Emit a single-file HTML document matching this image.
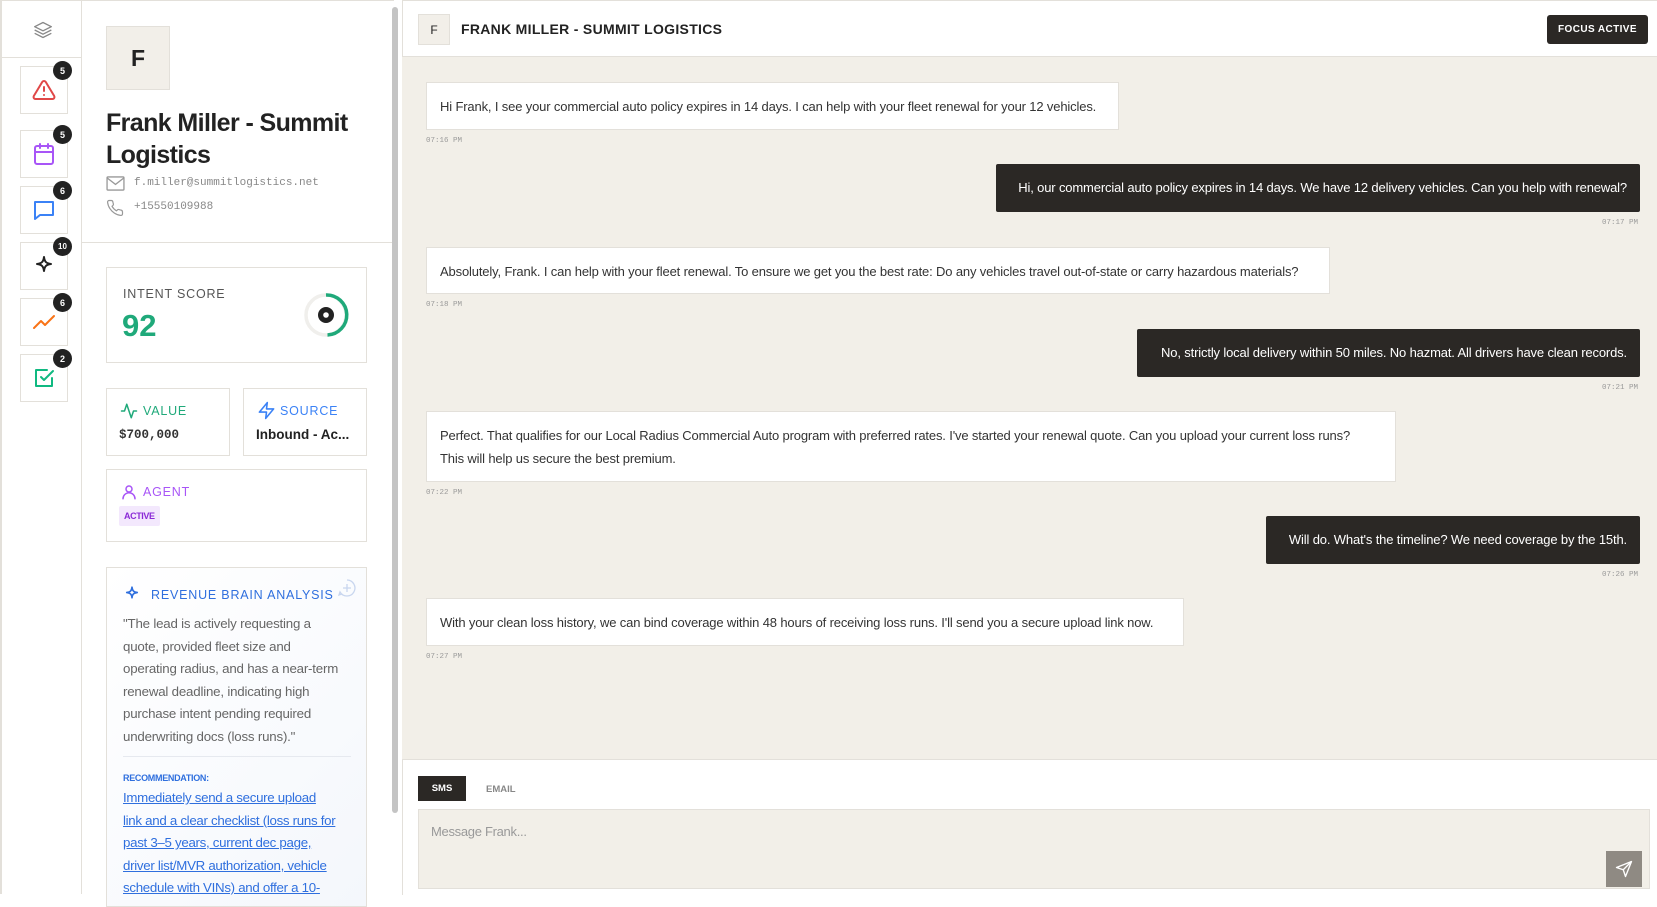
<!DOCTYPE html>
<html><head><meta charset="utf-8"><style>
*{box-sizing:border-box;margin:0;padding:0}
body{width:1657px;height:894px;overflow:hidden;font-family:"Liberation Sans",sans-serif;background:#fff;position:relative;color:#222}
.abs{position:absolute}
.rail{left:0;top:0;width:82px;height:894px;border-right:1px solid #e3e0da;border-left:2px solid #e3e0da;border-top:1px solid #e3e0da;background:#fff}
.ib{position:absolute;left:18px;width:48px;height:48px;border:1px solid #e3e0da;background:#fff;display:flex;align-items:center;justify-content:center}
.bd{position:absolute;left:32px;top:-6px;width:19px;height:19px;border-radius:50%;background:#222;color:#fff;font-size:9px;font-weight:bold;display:flex;align-items:center;justify-content:center}
.prof{left:82px;top:0;width:312px;height:894px;background:#fff;border-top:1px solid #e3e0da}
.card{position:absolute;border:1px solid #e3e0da;background:#fff}
.lbl{font-size:12.5px;letter-spacing:.8px}
.chat{left:402px;top:0;width:1255px;height:894px;background:#f2efe8;border-top:1px solid #e3e0da}
.msg{position:absolute;font-size:13px;letter-spacing:-.15px;line-height:23px;padding:12px 13px;white-space:nowrap}
.in{background:#fff;border:1px solid #e3e0da;color:#333}
.out{background:#2b2825;color:#fff;border-radius:2px}
.ts{position:absolute;font-family:"Liberation Mono",monospace;font-size:7.5px;color:#999}
.nw{white-space:nowrap}
</style></head><body>
<div class="abs rail">
 <div class="abs" style="left:0;top:56px;width:80px;border-top:1px solid #e3e0da"></div>
 <svg class="abs" style="left:30px;top:19px" width="22" height="20" viewBox="0 0 24 24" fill="none" stroke="#888" stroke-width="1.6" stroke-linejoin="round"><path d="M12 3 2 8l10 5 10-5z"/><path d="m2 12 10 5 10-5"/><path d="m2 16 10 5 10-5"/></svg>
 <div class="ib" style="top:65px"><svg width="26" height="24" viewBox="0 0 24 24" fill="none" stroke="#e04848" stroke-width="2" stroke-linecap="round" stroke-linejoin="round"><path d="M10.3 3.9 1.8 18a2 2 0 0 0 1.7 3h17a2 2 0 0 0 1.7-3L13.7 3.9a2 2 0 0 0-3.4 0z"/><path d="M12 9v4M12 17h.01"/></svg><div class="bd">5</div></div>
 <div class="ib" style="top:129px"><svg width="24" height="24" viewBox="0 0 24 24" fill="none" stroke="#a855f7" stroke-width="2" stroke-linecap="round"><rect x="3" y="4" width="18" height="18" rx="2"/><path d="M16 2v4M8 2v4M3 10h18"/></svg><div class="bd">5</div></div>
 <div class="ib" style="top:185px"><svg width="24" height="24" viewBox="0 0 24 24" fill="none" stroke="#3b82f6" stroke-width="2" stroke-linejoin="round"><path d="M3 4h18v13H8l-5 4z"/></svg><div class="bd">6</div></div>
 <div class="ib" style="top:241px"><svg width="24" height="24" viewBox="0 0 24 24" fill="none" stroke="#222" stroke-width="2" stroke-linejoin="round"><path d="M12 3c.6 4.8 2.2 6.4 7 7-4.8.6-6.4 2.2-7 7-.6-4.8-2.2-6.4-7-7 4.8-.6 6.4-2.2 7-7z"/></svg><div class="bd" style="font-size:8px">10</div></div>
 <div class="ib" style="top:297px"><svg width="26" height="24" viewBox="0 0 24 24" fill="none" stroke="#f97316" stroke-width="2" stroke-linecap="round" stroke-linejoin="round"><path d="M2 18l7-7 4 4 9-9"/></svg><div class="bd">6</div></div>
 <div class="ib" style="top:353px"><svg width="24" height="24" viewBox="0 0 24 24" fill="none" stroke="#10b981" stroke-width="2" stroke-linecap="round" stroke-linejoin="round"><path d="M20 12v8H4V4h11"/><path d="m9 11 3 3 9-9"/></svg><div class="bd">2</div></div>
</div>
<div class="abs prof">
 <div class="abs" style="left:24px;top:25px;width:64px;height:64px;background:#f2efe9;border:1px solid #e3e0da;display:flex;align-items:center;justify-content:center;font-size:23px;font-weight:bold">F</div>
 <div class="abs" style="left:24px;top:106px;width:270px;font-size:25px;font-weight:bold;line-height:32px;letter-spacing:-.6px;color:#222">Frank Miller - Summit Logistics</div>
 <svg class="abs" style="left:24px;top:175px" width="19" height="15" viewBox="0 0 20 16" fill="none" stroke="#999" stroke-width="1.4"><rect x="1" y="1" width="18" height="14" rx="1"/><path d="m1 2 9 7 9-7"/></svg>
 <div class="abs" style="left:52px;top:176px;font-family:'Liberation Mono',monospace;font-size:11px;color:#888">f.miller@summitlogistics.net</div>
 <svg class="abs" style="left:24px;top:198px" width="18" height="18" viewBox="0 0 24 24" fill="none" stroke="#999" stroke-width="1.6" stroke-linejoin="round"><path d="M22 16.9v3a2 2 0 0 1-2.2 2 19.8 19.8 0 0 1-8.6-3.1 19.5 19.5 0 0 1-6-6A19.8 19.8 0 0 1 2.1 4.2 2 2 0 0 1 4.1 2h3a2 2 0 0 1 2 1.7c.1.9.4 1.8.7 2.7a2 2 0 0 1-.5 2.1L8 9.8a16 16 0 0 0 6 6l1.3-1.3a2 2 0 0 1 2.1-.4c.9.3 1.8.6 2.7.7a2 2 0 0 1 1.7 2z"/></svg>
 <div class="abs" style="left:52px;top:200px;font-family:'Liberation Mono',monospace;font-size:11px;color:#888">+15550109988</div>
 <div class="abs" style="left:0;top:241px;width:312px;border-top:1px solid #e3e0da"></div>
 <div class="card" style="left:24px;top:266px;width:261px;height:96px">
  <div class="abs lbl" style="left:16px;top:19px;color:#555">INTENT SCORE</div>
  <div class="abs" style="left:15px;top:40px;font-size:31px;font-weight:bold;color:#1fa97a">92</div>
  <svg class="abs" style="left:196px;top:24px" width="46" height="46" viewBox="0 0 46 46"><circle cx="23" cy="23" r="20" fill="none" stroke="#f0efec" stroke-width="3.5"/><path d="M23 3a20 20 0 0 1 1.5 40" fill="none" stroke="#1fa97a" stroke-width="3.5"/><circle cx="23" cy="23" r="8" fill="#222"/><circle cx="23" cy="23" r="2.8" fill="#fff"/></svg>
 </div>
 <div class="card" style="left:24px;top:387px;width:124px;height:68px">
  <svg class="abs" style="left:13px;top:13px" width="18" height="18" viewBox="0 0 24 24" fill="none" stroke="#1fa97a" stroke-width="2" stroke-linecap="round" stroke-linejoin="round"><path d="M22 12h-4l-3 9L9 3l-3 9H2"/></svg>
  <div class="abs lbl" style="left:36px;top:15px;color:#1fa97a">VALUE</div>
  <div class="abs" style="left:12px;top:39px;font-family:'Liberation Mono',monospace;font-size:12.5px;font-weight:bold;color:#333">$700,000</div>
 </div>
 <div class="card" style="left:161px;top:387px;width:124px;height:68px">
  <svg class="abs" style="left:13px;top:12px" width="19" height="19" viewBox="0 0 24 24" fill="none" stroke="#3b82f6" stroke-width="2" stroke-linejoin="round"><path d="M13 2 3 14h9l-1 8 10-12h-9z"/></svg>
  <div class="abs lbl" style="left:36px;top:15px;color:#3b82f6">SOURCE</div>
  <div class="abs" style="left:12px;top:38px;font-size:13.5px;font-weight:bold;color:#222">Inbound - Ac...</div>
 </div>
 <div class="card" style="left:24px;top:468px;width:261px;height:73px">
  <svg class="abs" style="left:13px;top:13px" width="18" height="18" viewBox="0 0 24 24" fill="none" stroke="#a855f7" stroke-width="2" stroke-linecap="round"><circle cx="12" cy="8" r="4"/><path d="M4 21a8 8 0 0 1 16 0"/></svg>
  <div class="abs lbl" style="left:36px;top:15px;color:#a855f7">AGENT</div>
  <div class="abs" style="left:12px;top:36px;background:#f3e8fd;color:#8b2ad6;font-size:9px;font-weight:bold;letter-spacing:-.4px;padding:5px 5px;border-radius:2px">ACTIVE</div>
 </div>
 <div class="card" style="left:24px;top:566px;width:261px;height:340px;background:linear-gradient(135deg,#fff,#f4f7fc)">
  <svg class="abs" style="left:16px;top:17px" width="18" height="18" viewBox="0 0 24 24" fill="none" stroke="#2f6fde" stroke-width="2.2" stroke-linejoin="round"><path d="M12 3c.6 4.8 2.2 6.4 7 7-4.8.6-6.4 2.2-7 7-.6-4.8-2.2-6.4-7-7 4.8-.6 6.4-2.2 7-7z"/></svg>
  <div class="abs lbl" style="left:44px;top:20px;color:#2f6fde">REVENUE BRAIN ANALYSIS</div>
  <svg class="abs" style="left:230px;top:10px" width="20" height="20" viewBox="0 0 20 20" fill="none" stroke="#c8d6ef" stroke-width="1.3"><path d="M10 2a8 8 0 1 1-7 12l-1 3 3-1"/><path d="M10 6v8M6 10h8"/></svg>
  <div class="abs nw" style="left:16px;top:45px;font-size:13.3px;line-height:22.5px;color:#666;letter-spacing:-.2px">"The lead is actively requesting a<br>quote, provided fleet size and<br>operating radius, and has a near-term<br>renewal deadline, indicating high<br>purchase intent pending required<br>underwriting docs (loss runs)."</div>
  <div class="abs" style="left:16px;top:188px;width:228px;border-top:1px solid #e6e9ef"></div>
  <div class="abs" style="left:16px;top:205px;font-size:9px;font-weight:bold;color:#2f6fde;letter-spacing:-.3px">RECOMMENDATION:</div>
  <div class="abs nw" style="left:16px;top:219px;font-size:13.3px;line-height:22.5px;color:#2f6fde;text-decoration:underline;letter-spacing:-.3px">Immediately send a secure upload<br>link and a clear checklist (loss runs for<br>past 3–5 years, current dec page,<br>driver list/MVR authorization, vehicle<br>schedule with VINs) and offer a 10-</div>
 </div>
 <div class="abs" style="left:310px;top:6px;width:6px;height:806px;background:#c4c4c4;border-radius:3px"></div>
</div>
<div class="abs chat">
 <div class="abs" style="left:0;top:0;width:1255px;height:56px;background:#fff;border-bottom:1px solid #e3e0da;border-left:1px solid #e3e0da"></div>
 <div class="abs" style="left:16px;top:13px;width:32px;height:31px;background:#f2efe9;border:1px solid #e3e0da;font-size:12px;display:flex;align-items:center;justify-content:center">F</div>
 <div class="abs" style="left:59px;top:20px;font-size:14px;font-weight:bold;letter-spacing:.3px;color:#222">FRANK MILLER - SUMMIT LOGISTICS</div>
 <div class="abs" style="left:1145px;top:14px;width:101px;height:29px;background:#2b2825;border-radius:3px;color:#fff;font-size:10px;font-weight:bold;letter-spacing:.4px;display:flex;align-items:center;justify-content:center">FOCUS ACTIVE</div>

 <div class="msg in" style="left:24px;top:81px;width:693px;height:48px">Hi Frank, I see your commercial auto policy expires in 14 days. I can help with your fleet renewal for your 12 vehicles.</div>
 <div class="ts" style="left:24px;top:136px">07:16 PM</div>
 <div class="msg out" style="left:594px;top:163px;width:644px;height:48px;text-align:right">Hi, our commercial auto policy expires in 14 days. We have 12 delivery vehicles. Can you help with renewal?</div>
 <div class="ts" style="left:1200px;top:218px">07:17 PM</div>
 <div class="msg in" style="left:24px;top:246px;width:904px;height:47px">Absolutely, Frank. I can help with your fleet renewal. To ensure we get you the best rate: Do any vehicles travel out-of-state or carry hazardous materials?</div>
 <div class="ts" style="left:24px;top:300px">07:18 PM</div>
 <div class="msg out" style="left:735px;top:328px;width:503px;height:48px;text-align:right">No, strictly local delivery within 50 miles. No hazmat. All drivers have clean records.</div>
 <div class="ts" style="left:1200px;top:383px">07:21 PM</div>
 <div class="msg in" style="left:24px;top:410px;width:970px;height:71px">Perfect. That qualifies for our Local Radius Commercial Auto program with preferred rates. I've started your renewal quote. Can you upload your current loss runs?<br>This will help us secure the best premium.</div>
 <div class="ts" style="left:24px;top:488px">07:22 PM</div>
 <div class="msg out" style="left:864px;top:515px;width:374px;height:48px;text-align:right">Will do. What's the timeline? We need coverage by the 15th.</div>
 <div class="ts" style="left:1200px;top:570px">07:26 PM</div>
 <div class="msg in" style="left:24px;top:597px;width:758px;height:48px">With your clean loss history, we can bind coverage within 48 hours of receiving loss runs. I'll send you a secure upload link now.</div>
 <div class="ts" style="left:24px;top:652px">07:27 PM</div>

 <div class="abs" style="left:0;top:758px;width:1255px;height:136px;background:#fff;border-top:1px solid #e3e0da;border-left:1px solid #e3e0da"></div>
 <div class="abs" style="left:16px;top:775px;width:48px;height:25px;background:#2b2825;color:#fff;font-size:9.5px;font-weight:bold;display:flex;align-items:center;justify-content:center">SMS</div>
 <div class="abs" style="left:84px;top:783px;font-size:9.5px;color:#888;font-weight:bold">EMAIL</div>
 <div class="abs" style="left:16px;top:808px;width:1232px;height:80px;background:#f2efe8;border:1px solid #e3e0da"></div>
 <div class="abs" style="left:29px;top:823px;font-size:13px;color:#999;letter-spacing:-.3px">Message Frank...</div>
 <div class="abs" style="left:1204px;top:850px;width:36px;height:36px;background:#8f8a83;display:flex;align-items:center;justify-content:center"><svg width="18" height="18" viewBox="0 0 24 24" fill="none" stroke="#fff" stroke-width="1.8" stroke-linejoin="round"><path d="M22 2 2 10l9 3 3 9z"/><path d="M22 2 11 13"/></svg></div>
</div>
</body></html>
